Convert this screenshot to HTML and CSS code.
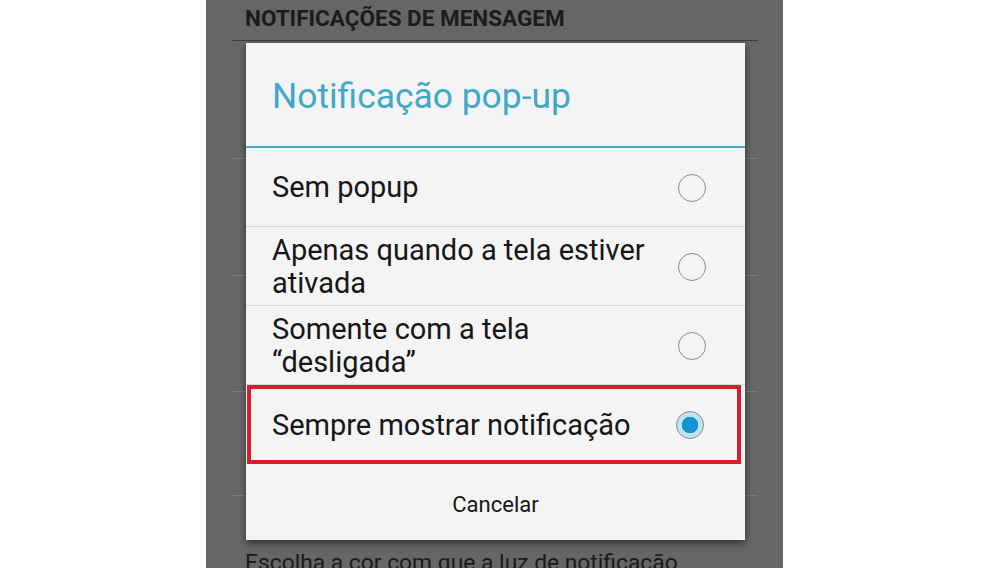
FILE: index.html
```html
<!DOCTYPE html>
<html lang="pt">
<head>
<meta charset="utf-8">
<title>Notificação pop-up</title>
<link rel="stylesheet" href="styles.css">
</head>
<body>
<div class="page">
  <div class="screen">
    <div class="settings">
      <div class="section-title">NOTIFICAÇÕES DE MENSAGEM</div>
      <div class="bg-row r1"></div>
      <div class="bg-row r2"></div>
      <div class="bg-row r3"></div>
      <div class="bg-row r4"></div>
      <div class="bg-text">Escolha a cor com que a luz de notificação</div>
    </div>

    <div class="dialog">
      <div class="dialog-title">Notificação pop-up</div>
      <div class="options">
        <div class="option">
          <span class="label">Sem popup</span>
          <span class="radio"></span>
        </div>
        <div class="option">
          <span class="label">Apenas quando a tela estiver<br>ativada</span>
          <span class="radio"></span>
        </div>
        <div class="option">
          <span class="label">Somente com a tela<br>“desligada”</span>
          <span class="radio"></span>
        </div>
        <div class="option highlighted">
          <span class="label">Sempre mostrar notificação</span>
          <span class="radio checked"></span>
        </div>
      </div>
      <div class="dialog-button">Cancelar</div>
    </div>
  </div>
</div>
</body>
</html>
```

FILE: styles.css
```css
html, body {
  margin: 0;
  padding: 0;
  background: #ffffff;
}

.page {
  width: 984px;
  height: 568px;
  display: flex;
  justify-content: flex-start;
  overflow: hidden;
  font-family: Roboto, "Liberation Sans", sans-serif;
}

.screen {
  position: relative;
  margin-left: 206px;
  width: 577px;
  height: 568px;
  background: #666666;
  overflow: hidden;
}

.settings {
  display: flex;
  flex-direction: column;
  padding: 0 25px 0 26px;
}

.section-title {
  height: 33px;
  padding: 7px 0 0 13px;
  box-sizing: content-box;
  font-size: 22.5px;
  line-height: 22px;
  font-weight: 700;
  color: #1c1c1c;
  border-bottom: 1px solid #3e3e3e;
  white-space: nowrap;
}

.bg-row {
  border-bottom: 1px solid #7a7a7a;
}
.r1 { height: 117px; }
.r2 { height: 116px; }
.r3 { height: 115px; }
.r4 { height: 103px; }

.bg-text {
  padding: 56px 0 0 13px;
  font-size: 22.8px;
  line-height: 22px;
  color: #1a1a1a;
  white-space: nowrap;
}

.dialog {
  position: absolute;
  left: 40px;
  top: 43px;
  width: 499px;
  height: 497px;
  background: #f4f4f4;
  box-shadow: 0 3px 7px rgba(0, 0, 0, 0.55);
  display: flex;
  flex-direction: column;
}

.dialog-title {
  height: 100px;
  display: flex;
  align-items: center;
  padding: 3px 0 0 26px;
  font-size: 35.4px;
  line-height: 35px;
  color: #42a8c8;
  border-bottom: 2px solid #3aafcc;
}

.options {
  display: flex;
  flex-direction: column;
}

.option {
  height: 78px;
  display: flex;
  align-items: center;
  justify-content: space-between;
  padding: 1px 39px 0 26px;
  box-sizing: content-box;
  height: 77px;
  border-bottom: 1px solid #d6d6d6;
  font-size: 29px;
  line-height: 33px;
  color: #161616;
}

.option.highlighted {
  margin-left: 1px;
  width: 494px;
  box-sizing: border-box;
  height: 79px;
  padding: 1px 33px 0 21px;
  border: 4px solid #d4202c;
}

.radio {
  width: 26px;
  height: 26px;
  border-radius: 50%;
  border: 1.5px solid #8c8c8c;
  flex-shrink: 0;
  box-sizing: content-box;
}

.radio.checked {
  background: radial-gradient(circle, #1593d0 0 8px, #bde4f3 8.5px 100%);
}

.dialog-button {
  flex: 1;
  display: flex;
  align-items: center;
  justify-content: center;
  padding-top: 4px;
  font-size: 22px;
  color: #161616;
}
```
